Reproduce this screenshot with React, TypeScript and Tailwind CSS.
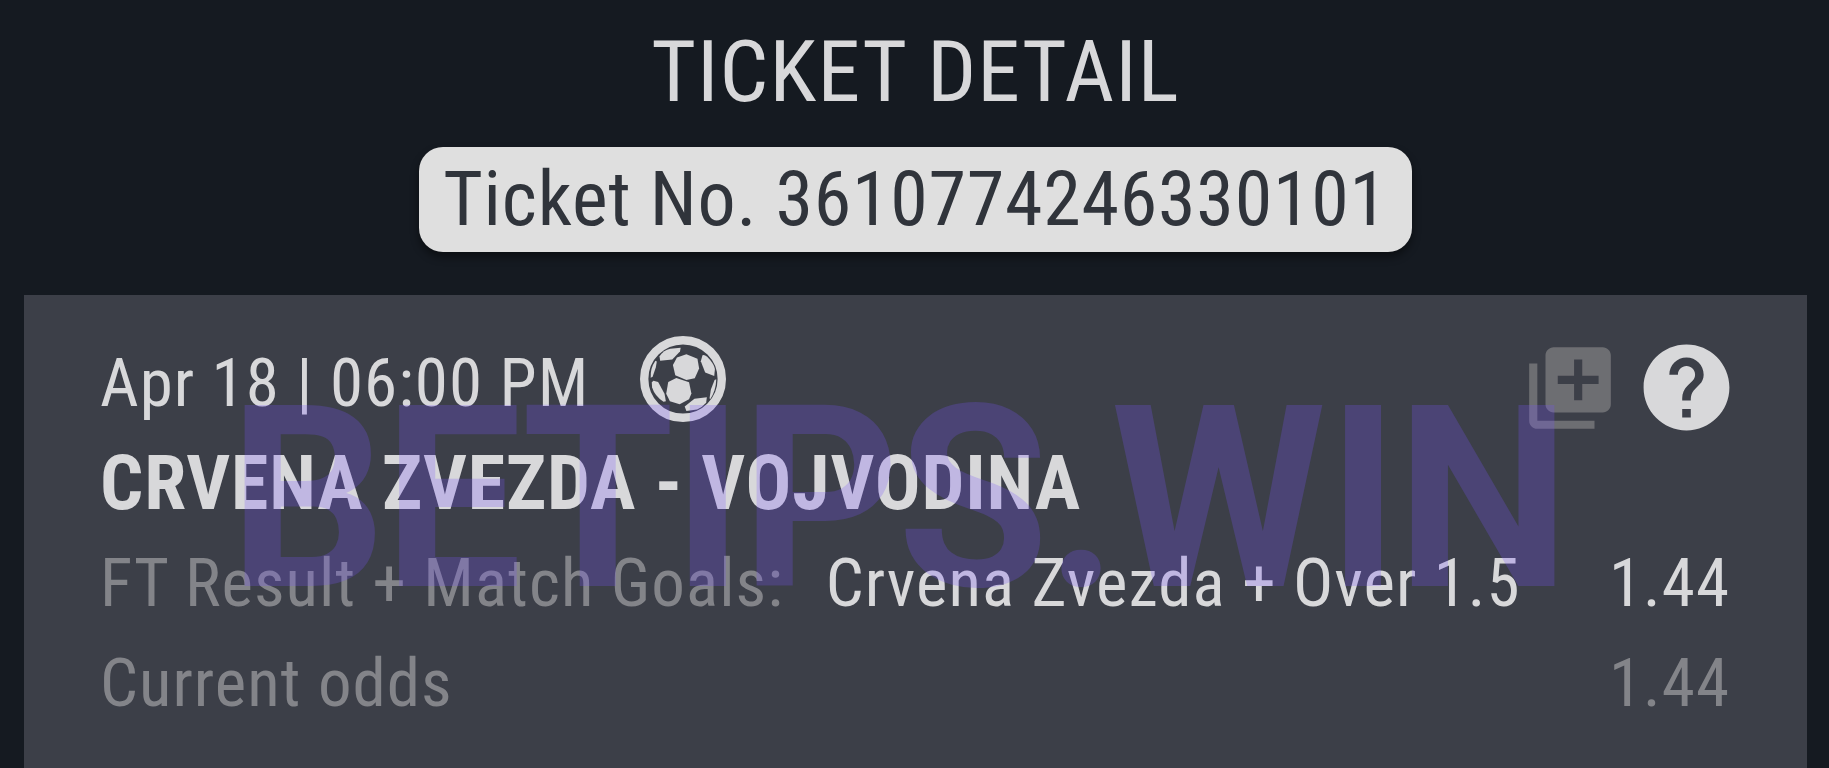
import { MdHelp, MdLibraryAdd } from "react-icons/md";

const ticket = {
  number: "3610774246330101",
  date: "Apr 18 | 06:00 PM",
  match: "CRVENA ZVEZDA - VOJVODINA",
  market: "FT Result + Match Goals:",
  pick: "Crvena Zvezda + Over 1.5",
  odds: "1.44",
  currentOdds: "1.44",
};

function SoccerIcon({ className }: { className?: string }) {
  return (
    <svg viewBox="14 12 256 256" fill="currentColor" className={className}>
      <circle cx="142" cy="140" r="115.5" fill="none" stroke="currentColor" strokeWidth="25" />
      <g>
        <path d="M124 76 152 66 185 80 190 109 177 138 152 143 119 129 112 98Z" />
        <path d="M98 149 122 137 160 150 167 183 160 200 132 215 103 206 92 184Z" />
        <path d="M72 73Q84 54 104 50L135 47 133 58 110 82 74 86Z" />
        <path d="M200 69Q206 67 214 74 234 94 237 110L235 131 208 121 195 87Z" />
        <path d="M49 150 54 145 68 149 87 184 91 206 84 208Q58 190 50 165Z" />
        <path d="M176 199 213 194 211 211Q200 224 184 231L152 235 147 222Z" />
        <path d="M60 86 64 88 61 106 52 132 46 137Q44 108 60 86Z" />
        <path d="M236 143 241 141Q240 176 223 200L221 197 225 171Z" />
      </g>
    </svg>
  );
}

export default function App() {
  return (
    <main className="relative flex h-screen flex-col items-center overflow-hidden bg-[#151a21] font-['Roboto_Condensed',Roboto,sans-serif] whitespace-nowrap text-[#d8d8da]">
      <h1 className="mb-[3px] ml-0.5 h-36 text-[86px] leading-[144px] tracking-[1.1px]">TICKET DETAIL</h1>

      <div className="ml-0.5 flex h-[105px] w-[993px] shrink-0 items-center justify-center rounded-3xl bg-[#dfdfdf] pb-px text-[76px] leading-none tracking-[0.75px] text-[#30343b] shadow-[0_5px_8px_rgba(0,0,0,0.45)]">
        Ticket No. {ticket.number}
      </div>

      <section className="mt-[43px] ml-0.5 grid w-[1783px] flex-1 auto-rows-[100px] bg-[#3c3f48] pt-[38px] pr-[77px] pl-[76px] text-[67px] leading-[100px] tracking-[1.03px]">
        <div className="flex items-center">
          <span>{ticket.date}</span>
          <SoccerIcon className="mb-2 ml-[51px] size-[86px]" />
          <MdLibraryAdd className="mt-2.5 ml-auto size-[98px] text-[#6d6e72]" />
          <MdHelp className="mt-2 -mr-2 ml-4 size-[103px]" />
        </div>
        <h2 className="text-[76px] font-bold tracking-[0.85px]">{ticket.match}</h2>
        <div className="flex">
          <span className="text-[#838489]">{ticket.market}</span>
          <span className="ml-[42px]">{ticket.pick}</span>
          <span className="ml-auto">{ticket.odds}</span>
        </div>
        <div className="flex justify-between text-[#838489]">
          <span>Current odds</span>
          <span>{ticket.currentOdds}</span>
        </div>
      </section>

      {/* watermark */}
      <div className="pointer-events-none absolute top-[377px] left-[229px] origin-left scale-x-97 font-[Roboto] text-[254px] leading-[244px] font-bold tracking-[-2.8px] text-[#7853fc]/25">
        BETIPS<span className="tracking-[-7px]">.</span>
        <span className="tracking-[0.5px]">W</span>IN
      </div>
    </main>
  );
}
